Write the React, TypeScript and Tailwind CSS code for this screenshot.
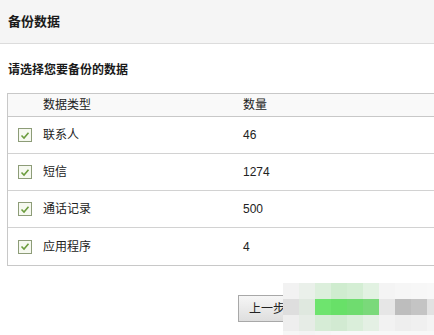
const rows = [
  { name: "联系人", count: "46" },
  { name: "短信", count: "1274" },
  { name: "通话记录", count: "500" },
  { name: "应用程序", count: "4" },
];

// pixelated patch from the screenshot, 16px blocks
const mosaic = [
  ["#f2f2f2", "#eaf0ea", "#dcefdc", "#cfeccf", "#d4eed4", "#e2f2e2", "#f4f4f4", "#f6f6f6", "#f7f7f7", "#f8f8f8"],
  ["#dedede", "#dfe8df", "#6ee46e", "#68e068", "#6fdc6f", "#7ad97a", "#e6e6e6", "#bdbdbd", "#c4c4c4", "#e2e2e2"],
  ["#eeeeee", "#e6ece6", "#d6ecd6", "#d2ead2", "#daeeda", "#e4f0e4", "#f2f2f2", "#eeeeee", "#f0f0f0", "#f4f4f4"],
  ["#f6f6f6", "#f4f4f4", "#f6f6f6", "#f8f8f8", "#f8f8f8", "#f8f8f8", "#f8f8f8", "#f8f8f8", "#f8f8f8", "#f8f8f8"],
];

function CheckBox() {
  return (
    <span className="flex h-[14px] w-[14px] items-center justify-center border border-[#8d9c78] bg-[#f6f9f0]">
      <svg width="10" height="9" viewBox="0 0 10 9">
        <path d="M1.5 4.5 L4 7 L8.5 1.8" fill="none" stroke="#6c9d3e" strokeWidth="1.6" />
      </svg>
    </span>
  );
}

export default function App() {
  return (
    <div
      className="relative h-[335px] w-[434px] overflow-hidden bg-white text-[#222]"
      style={{ fontFamily: '"Liberation Sans", "Noto Sans CJK SC", sans-serif' }}
    >
      {/* header */}
      <div className="flex h-[44px] items-center border-b border-[#dcdcdc] bg-[#f5f5f5] px-2">
        <span className="text-[13px] font-bold text-[#1a1a1a]">备份数据</span>
      </div>

      <div className="px-2 pt-[17px] text-[12px] font-bold text-[#1a1a1a]">请选择您要备份的数据</div>

      {/* table */}
      <div className="ml-[7px] mt-[14px] w-[440px] border border-r-0 border-[#c8c8c8] text-[12px]">
        <div className="flex h-[23px] items-center border-b border-[#c8c8c8] bg-[#f9f9f9]">
          <span className="w-[200px] pl-[35px]">数据类型</span>
          <span className="pl-[35px]">数量</span>
        </div>
        {rows.map((r, i) => (
          <div
            key={r.name}
            className={`flex h-[37px] items-center ${i < rows.length - 1 ? "border-b border-[#d2d2d2]" : ""}`}
          >
            <div className="flex w-[200px] items-center">
              <span className="ml-[10px] mr-[11px]">
                <CheckBox />
              </span>
              <span>{r.name}</span>
            </div>
            <span className="pl-[35px]">{r.count}</span>
          </div>
        ))}
      </div>

      {/* buttons */}
      <div className="mt-[29px] flex pl-[238px]">
        <button className="h-[27px] w-[60px] border border-[#a8a8a8] bg-gradient-to-b from-[#f6f6f6] to-[#dedede] pl-[10px] text-left text-[12px] text-[#222]">
          上一步
        </button>
      </div>

      {/* pixelated overlay */}
      <div className="absolute left-[283px] top-[283px] flex flex-col">
        {mosaic.map((line, y) => (
          <div key={y} className="flex">
            {line.map((c, x) => (
              <div key={x} className="h-[16px] w-[16px]" style={{ background: c }} />
            ))}
          </div>
        ))}
      </div>
    </div>
  );
}
